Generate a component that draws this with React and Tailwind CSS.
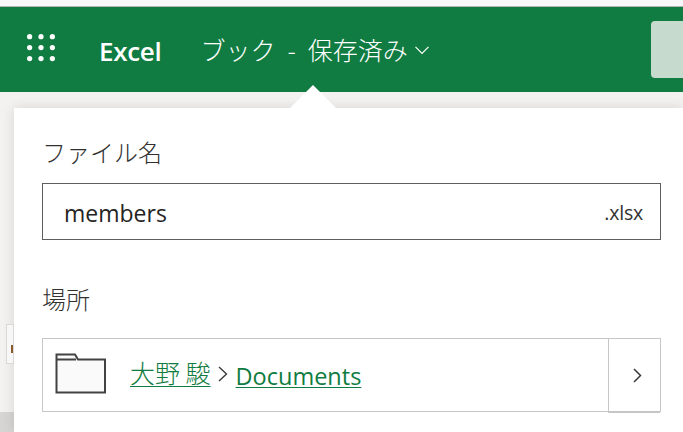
const font = { fontFamily: '"Open Sans", "Noto Sans CJK JP", sans-serif' };
const jp = { fontFamily: '"Noto Sans CJK JP", sans-serif' };

function Waffle() {
  const dots = [];
  for (let y = 0; y < 3; y++) for (let x = 0; x < 3; x++) dots.push(<circle key={`${x}-${y}`} cx={3 + x * 13} cy={3 + y * 12.5} r="3" fill="#fff" />);
  return <svg width="28" height="30" viewBox="0 0 32 32" className="w-[28px] h-[30px]">{dots}</svg>;
}

export default function App() {
  return (
    <div className="relative w-[683px] h-[432px] overflow-hidden flex flex-col bg-[#f3f2f1]" style={font}>
      <div className="h-[7px] bg-[#f8f8fb] border-b border-[#b5b5b5]" />
      <header className="h-[85px] bg-[#107c41] flex items-center text-white relative">
        <div className="ml-[27px] w-[28px] mb-[4px]"><Waffle /></div>
        <span className="ml-[44px] text-[26px] font-semibold tracking-[-0.3px] mt-[3px]">Excel</span>
        <span className="ml-[39px] text-[25px] font-light flex items-center" style={jp}>ブック<span className="mx-[12px]">-</span>保存済み</span>
        <svg width="14" height="9" viewBox="0 0 14 9" className="ml-[7px] mt-[2px]" fill="none" stroke="#fff" strokeWidth="1.2"><path d="M0.5 0.8 L7 7.3 L13.5 0.8" /></svg>
        <div className="absolute left-[651px] top-[14px] w-[40px] h-[57px] bg-[#c6dacd] rounded-[4px]" />
      </header>
      <div className="flex-1 flex min-h-0">
        <div className="w-[14px] shrink-0 flex flex-col">
          <div className="h-[232px]" />
          <div className="relative h-[40px] bg-[#f7f7f7] border border-[#d8d8d8] ml-[6px]">
            <div className="absolute right-0 top-[20px] w-[2px] h-[8px] bg-[#8a5a2a]" />
          </div>
          <div className="flex-1 mt-[48px] bg-[#d6d5d3]" />
        </div>
        <main className="flex-1 mt-[16px] bg-white shadow-[0_0_12px_rgba(0,0,0,0.12)] pl-[28px] pr-[22px] text-[#323130] flex flex-col">
          <label className="mt-[27px] h-[34px] text-[24px] font-light leading-[34px]" style={jp}>ファイル名</label>
          <div className="mt-[14px] h-[57px] border border-[#605e5c] flex items-center justify-between pl-[21px] pr-[17px]">
            <span className="text-[23px] text-[#252423] mt-[3px]">members</span>
            <span className="text-[19.5px] mt-[3px] tracking-[-0.2px]">.xlsx</span>
          </div>
          <label className="mt-[42px] h-[34px] text-[24px] font-light leading-[34px]" style={jp}>場所</label>
          <div className="mt-[22px] h-[74px] border border-[#c8c6c4] flex items-center">
            <svg width="52" height="42" viewBox="0 0 52 42" className="ml-[12px] mt-[-2px] shrink-0">
              <path d="M1.5 6.5 V1.5 H20 L23 6.5 H50 V39.5 H1.5 Z" fill="#fafafa" stroke="#424242" strokeWidth="2" />
              <path d="M1.5 6.5 H21" fill="none" stroke="#424242" strokeWidth="2" />
            </svg>
            <a className="ml-[23px] text-[25px] text-[#107c41] underline underline-offset-[3px] decoration-1 mb-[4px] font-light" style={jp}>大野 駿</a>
            <svg width="10" height="16" viewBox="0 0 10 16" className="ml-[7px] mb-[2px]" fill="none" stroke="#3b3a39" strokeWidth="1.4"><path d="M1 1 L8.5 8 L1 15" /></svg>
            <a className="ml-[8px] mt-[3px] text-[23.5px] text-[#107c41] underline underline-offset-[2px] decoration-1">Documents</a>
            <div className="ml-auto h-full w-[45px] border-l border-[#c8c6c4] border-b-2 flex items-center justify-center pl-[6px] mb-[-1px] box-content shrink-0">
              <svg width="9" height="15" viewBox="0 0 9 15" fill="none" stroke="#3b3a39" strokeWidth="1.5" className="mt-[2px]"><path d="M1 1 L7.5 7.5 L1 14" /></svg>
            </div>
          </div>
        </main>
      </div>
      <div className="absolute left-[290px] top-[85px] w-0 h-0 border-l-[23px] border-r-[23px] border-b-[23px] border-l-transparent border-r-transparent border-b-white" />
    </div>
  );
}
